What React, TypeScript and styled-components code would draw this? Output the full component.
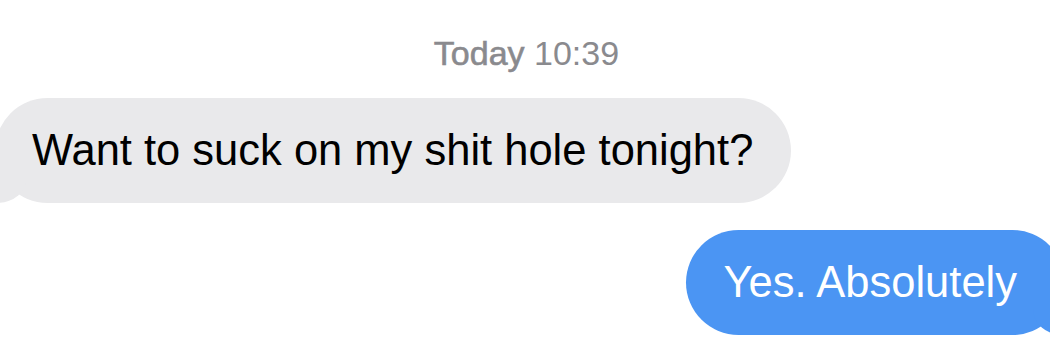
import React from "react";
import styled, { createGlobalStyle } from "styled-components";

const Global = createGlobalStyle`
  html, body { margin: 0; padding: 0; background: #ffffff; }
  body { font-family: "Liberation Sans", Arial, sans-serif; overflow: hidden; }
`;

const Thread = styled.div`
  width: 1050px;
  height: 349px;
  display: flex;
  flex-direction: column;
  padding-top: 33px;
  box-sizing: border-box;
  overflow: hidden;
`;

const Stamp = styled.div`
  text-align: center;
  font-size: 34px;
  line-height: 40px;
  color: #8a8a8e;
  padding-left: 3px;
  margin-bottom: 25px;
`;

const StampDay = styled.span`
  -webkit-text-stroke: 0.6px #8a8a8e;
`;

const Row = styled.div<{ $out?: boolean }>`
  display: flex;
  justify-content: ${(p) => (p.$out ? "flex-end" : "flex-start")};
  margin: ${(p) => (p.$out ? "0 -15px 0 0" : "0 0 27px -5px")};
`;

const Bubble = styled.div<{ $out?: boolean }>`
  position: relative;
  font-size: 43.5px;
  line-height: 53px;
  padding: 26px ${(p) => (p.$out ? "48px" : "38px")} 26px ${(p) => (p.$out ? "38px" : "37px")};
  border-radius: 53px;
  background: ${(p) => (p.$out ? "#4b95f3" : "#e9e9eb")};
  color: ${(p) => (p.$out ? "#ffffff" : "#000000")};
  white-space: nowrap;

  &::before {
    content: "";
    position: absolute;
    bottom: 0;
    ${(p) => (p.$out ? "right: -8px;" : "left: -8px;")}
    width: 40px;
    height: 40px;
    background: ${(p) => (p.$out ? "#4b95f3" : "#e9e9eb")};
    ${(p) =>
      p.$out
        ? "border-bottom-left-radius: 30px 26px;"
        : "border-bottom-right-radius: 30px 26px;"}
  }
  &::after {
    content: "";
    position: absolute;
    bottom: 0;
    ${(p) => (p.$out ? "right: -22px;" : "left: -22px;")}
    width: 22px;
    height: 40px;
    background: #ffffff;
    ${(p) =>
      p.$out
        ? "border-bottom-left-radius: 16px 14px;"
        : "border-bottom-right-radius: 16px 14px;"}
  }
`;

const Text = styled.span`
  position: relative;
  z-index: 1;
`;

export default function App() {
  return (
    <>
      <Global />
      <Thread>
        <Stamp>
          <StampDay>Today</StampDay> 10:39
        </Stamp>
        <Row>
          <Bubble>
            <Text>Want to suck on my shit hole tonight?</Text>
          </Bubble>
        </Row>
        <Row $out>
          <Bubble $out>
            <Text>Yes. Absolutely</Text>
          </Bubble>
        </Row>
      </Thread>
    </>
  );
}
